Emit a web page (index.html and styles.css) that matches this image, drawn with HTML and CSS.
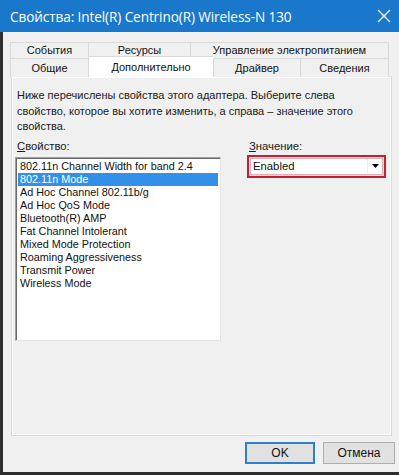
FILE: index.html
```html
<!DOCTYPE html>
<html>
<head>
<meta charset="utf-8">
<link rel="stylesheet" href="styles.css">
</head>
<body>
<div class="window">
  <div class="titlebar">
    <span class="title">Свойства: Intel(R) Centrino(R) Wireless-N 130</span>
    <svg class="close" width="14" height="14" viewBox="0 0 14 14"><path d="M1 1L13 13M13 1L1 13" stroke="#fff" stroke-width="1.3" fill="none"/></svg>
  </div>
  <div class="client">
    <div class="tabs">
      <div class="tabrow row1">
        <div class="tab t-events">События</div>
        <div class="tab t-res">Ресурсы</div>
        <div class="tab t-power">Управление электропитанием</div>
      </div>
      <div class="tabrow row2">
        <div class="tab t-gen">Общие</div>
        <div class="tab t-adv active">Дополнительно</div>
        <div class="tab t-drv">Драйвер</div>
        <div class="tab t-info">Сведения</div>
      </div>
    </div>
    <div class="panel">
      <p class="desc">Ниже перечислены свойства этого адаптера. Выберите слева свойство, которое вы хотите изменить, а справа – значение этого свойства.</p>
      <div class="fields">
        <div class="col-prop">
          <div class="label"><u>С</u>войство:</div>
          <div class="listbox">
            <div class="item">802.11n Channel Width for band 2.4</div>
            <div class="item sel">802.11n Mode</div>
            <div class="item">Ad Hoc Channel 802.11b/g</div>
            <div class="item">Ad Hoc QoS Mode</div>
            <div class="item">Bluetooth(R) AMP</div>
            <div class="item">Fat Channel Intolerant</div>
            <div class="item">Mixed Mode Protection</div>
            <div class="item">Roaming Aggressiveness</div>
            <div class="item">Transmit Power</div>
            <div class="item">Wireless Mode</div>
          </div>
        </div>
        <div class="col-val">
          <div class="label"><u>З</u>начение:</div>
          <div class="highlight">
            <div class="combo">
              <span class="combo-text">Enabled</span>
              <span class="combo-btn"><svg width="7" height="4" viewBox="0 0 7 4"><path d="M0 0H7L3.5 4Z" fill="#000"/></svg></span>
            </div>
          </div>
        </div>
      </div>
    </div>
    <div class="buttons">
      <div class="btn ok">OK</div>
      <div class="btn">Отмена</div>
    </div>
  </div>
</div>
</body>
</html>
```

FILE: styles.css
```css
html, body {
  margin: 0;
  padding: 0;
  width: 399px;
  height: 475px;
  overflow: hidden;
  background: #f0f0f0;
  font-family: "Liberation Sans", Arial, sans-serif;
  color: #1a1a1a;
}
.window {
  width: 399px;
  height: 475px;
  display: flex;
  flex-direction: column;
}
.titlebar {
  height: 32px;
  background: #1a78cc;
  display: flex;
  align-items: center;
  padding: 0 8px 0 10px;
  flex-shrink: 0;
}
.title {
  color: #fff;
  font-family: "Open Sans", "Noto Sans", sans-serif;
  font-size: 13.6px;
  flex: 1;
  letter-spacing: -0.1px;
}
.client {
  flex: 1;
  border-left: 3px solid #2e2e2e;
  border-bottom: 3px solid #2e2e2e;
  display: flex;
  flex-direction: column;
  padding: 10px 0 0 7px;
}
.tabs {
  width: 379px;
  position: relative;
  z-index: 2;
}
.tabrow {
  display: flex;
}
.tab {
  box-sizing: border-box;
  border: 1px solid #d9d9d9;
  border-bottom: none;
  border-right: none;
  background: #f0f0f0;
  font-size: 11px;
  text-align: center;
  color: #111;
}
.tab:last-child {
  border-right: 1px solid #d9d9d9;
}
.row1 .tab {
  height: 16px;
  line-height: 15px;
}
.row2 .tab {
  height: 19px;
  line-height: 18px;
}
.t-events { width: 78px; }
.t-res { width: 102px; }
.t-power { width: 199px; }
.t-gen { width: 78px; }
.t-adv { width: 125px; }
.t-drv { width: 87px; }
.t-info { width: 89px; }
.tab.active {
  background: #fff;
  height: 21px;
  margin-top: -2px;
  line-height: 20px;
  border-color: #d9d9d9;
  position: relative;
  z-index: 3;
}
.panel {
  box-sizing: border-box;
  margin-left: 1px;
  margin-top: -1px;
  width: 381px;
  height: 360px;
  border: 1px solid #d9d9d9;
  border-top-color: #e8e8e8;
  box-shadow: inset 1px 1px 0 #fff, inset -1px -1px 0 #fff;
  background: #f0f0f0;
  padding: 11px 5px 0 5px;
}
.desc {
  margin: 0;
  font-size: 11px;
  line-height: 15.5px;
  color: #1a1a1a;
}
.fields {
  display: flex;
  margin-top: 5px;
}
.col-prop {
  width: 233px;
  margin-left: -2px;
}
.label {
  font-size: 11.3px;
  line-height: 13px;
  padding-left: 2px;
  margin-bottom: 4px;
}
.label u {
  text-decoration-thickness: 1px;
  text-underline-offset: 1px;
}
.listbox {
  box-sizing: border-box;
  width: 206px;
  height: 184px;
  background: #fff;
  border: 1px solid;
  border-color: #a0a0a0 #e3e3e3 #e3e3e3 #a0a0a0;
  box-shadow: inset 1px 1px 0 #696969;
  padding: 2px 2px 0 2px;
}
.item {
  height: 13px;
  line-height: 13px;
  font-size: 10.8px;
  padding-left: 2px;
  color: #111;
  white-space: nowrap;
}
.item.sel {
  background: #3390e8;
  color: #fff;
}
.col-val {
  display: flex;
  flex-direction: column;
}
.col-val .label {
  padding-left: 2px;
  margin-bottom: 2px;
}
.highlight {
  box-sizing: border-box;
  width: 139px;
  height: 23px;
  border: 2px solid #c21f32;
  padding: 1px;
  background: #f3d6d9;
}
.combo {
  box-sizing: border-box;
  height: 100%;
  background: #fff;
  display: flex;
  align-items: center;
  border: 1px solid #e0b0b5;
}
.combo-text {
  flex: 1;
  font-size: 11.3px;
  padding-left: 2px;
  color: #111;
}
.combo-btn {
  width: 14px;
  height: 100%;
  display: flex;
  align-items: center;
  justify-content: center;
  border-left: 1px solid #eee;
}
.buttons {
  display: flex;
  justify-content: flex-end;
  gap: 8px;
  margin-top: 6px;
  padding-right: 4px;
}
.btn {
  box-sizing: border-box;
  width: 72px;
  height: 22px;
  border: 1px solid #adadad;
  background: #e1e1e1;
  font-size: 12px;
  line-height: 20px;
  text-align: center;
  color: #111;
}
.btn.ok {
  border: 2px solid #2f7fcf;
  line-height: 18px;
  width: 70px;
}
```
